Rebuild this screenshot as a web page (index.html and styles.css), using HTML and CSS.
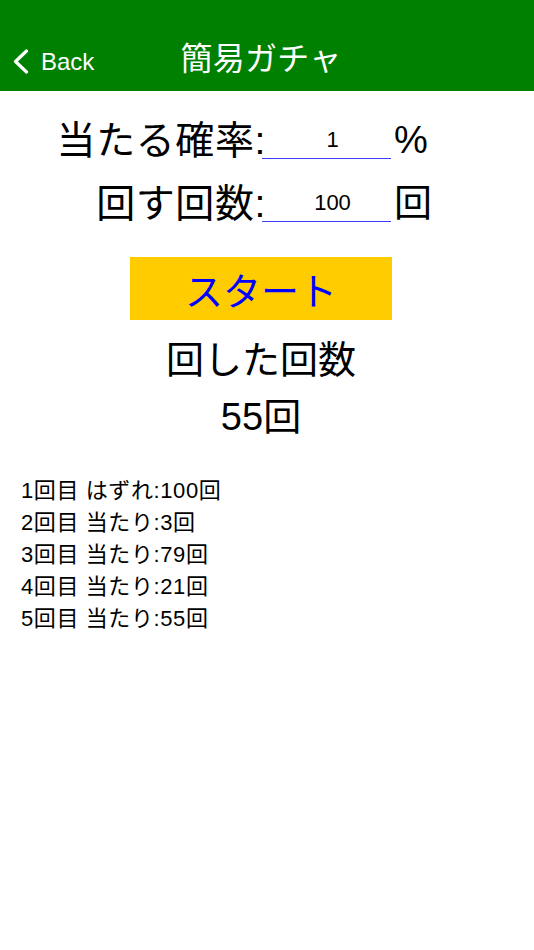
FILE: index.html
```html
<!DOCTYPE html>
<html lang="ja">
<head>
<meta charset="utf-8">
<title>簡易ガチャ</title>
<link rel="stylesheet" href="styles.css">
</head>
<body>
<header class="navbar">
  <div class="nav-inner">
    <a class="back" href="#">
      <svg class="chev" width="18" height="25" viewBox="0 0 18 25"><polyline points="14.5,2 3.5,12.5 14.5,23" fill="none" stroke="#fff" stroke-width="3.2" stroke-linecap="round" stroke-linejoin="round"/></svg>
      <span>Back</span>
    </a>
    <h1 class="title">簡易ガチャ</h1>
  </div>
</header>
<main class="content">
  <div class="form">
    <label class="lbl">当たる確率:</label>
    <div class="field">1</div>
    <span class="unit">%</span>
    <label class="lbl">回す回数:</label>
    <div class="field">100</div>
    <span class="unit">回</span>
  </div>
  <div class="btn-wrap"><button class="start">スタート</button></div>
  <div class="result">
    <div class="result-label">回した回数</div>
    <div class="result-value">55回</div>
  </div>
  <ul class="log">
    <li>1回目 はずれ:100回</li>
    <li>2回目 当たり:3回</li>
    <li>3回目 当たり:79回</li>
    <li>4回目 当たり:21回</li>
    <li>5回目 当たり:55回</li>
  </ul>
</main>
</body>
</html>
```

FILE: styles.css
```css
* { box-sizing: border-box; }
html, body { margin: 0; padding: 0; background: #fff; }
body {
  font-family: "Liberation Sans", "Noto Sans CJK JP", sans-serif;
  color: #000;
  width: 534px;
}
.navbar {
  background: #008000;
  height: 91px;
  padding-top: 28px;
}
.nav-inner {
  position: relative;
  height: 63px;
  display: flex;
  align-items: center;
  justify-content: center;
}
.back {
  position: absolute;
  left: 12px;
  top: 2px;
  height: 63px;
  display: flex;
  align-items: center;
  gap: 11px;
  color: #fff;
  text-decoration: none;
  font-size: 24px;
}
.chev { display: block; }
.title {
  margin: 0 12px 8px 0;
  color: #fff;
  font-weight: normal;
  font-size: 32px;
  letter-spacing: 0.3px;
}
.form {
  display: grid;
  grid-template-columns: 262px 129px auto;
  column-gap: 0;
  margin-top: 18px;
  align-items: end;
}
.lbl {
  justify-self: end;
  font-size: 39px;
  letter-spacing: 0.6px;
  line-height: 63px;
  height: 63px;
  margin-right: -4px;
}
.field {
  border-bottom: 1px solid #3d3dff;
  height: 50px;
  display: flex;
  align-items: flex-end;
  justify-content: center;
  line-height: 1;
  padding: 0 0 7px 12px;
  font-size: 22px;
  margin-bottom: 13px;
}
.unit {
  font-size: 38px;
  line-height: 63px;
  height: 63px;
  margin-left: 3px;
}
.btn-wrap {
  padding-left: 130px;
  margin-top: 22px;
}
.start {
  display: block;
  width: 262px;
  height: 63px;
  background: #ffcc00;
  border: none;
  color: #0000ff;
  font-family: inherit;
  font-size: 38px;
  padding: 0;
}
.result {
  text-align: center;
  padding-right: 12px;
  margin-top: 12px;
}
.result-label { font-size: 38px; line-height: 57px; }
.result-value { font-size: 38px; line-height: 57px; }
.log {
  list-style: none;
  margin: 29px 0 0;
  padding: 0 0 0 21px;
  font-size: 22px;
  letter-spacing: 0.6px;
  line-height: 32px;
}
```
